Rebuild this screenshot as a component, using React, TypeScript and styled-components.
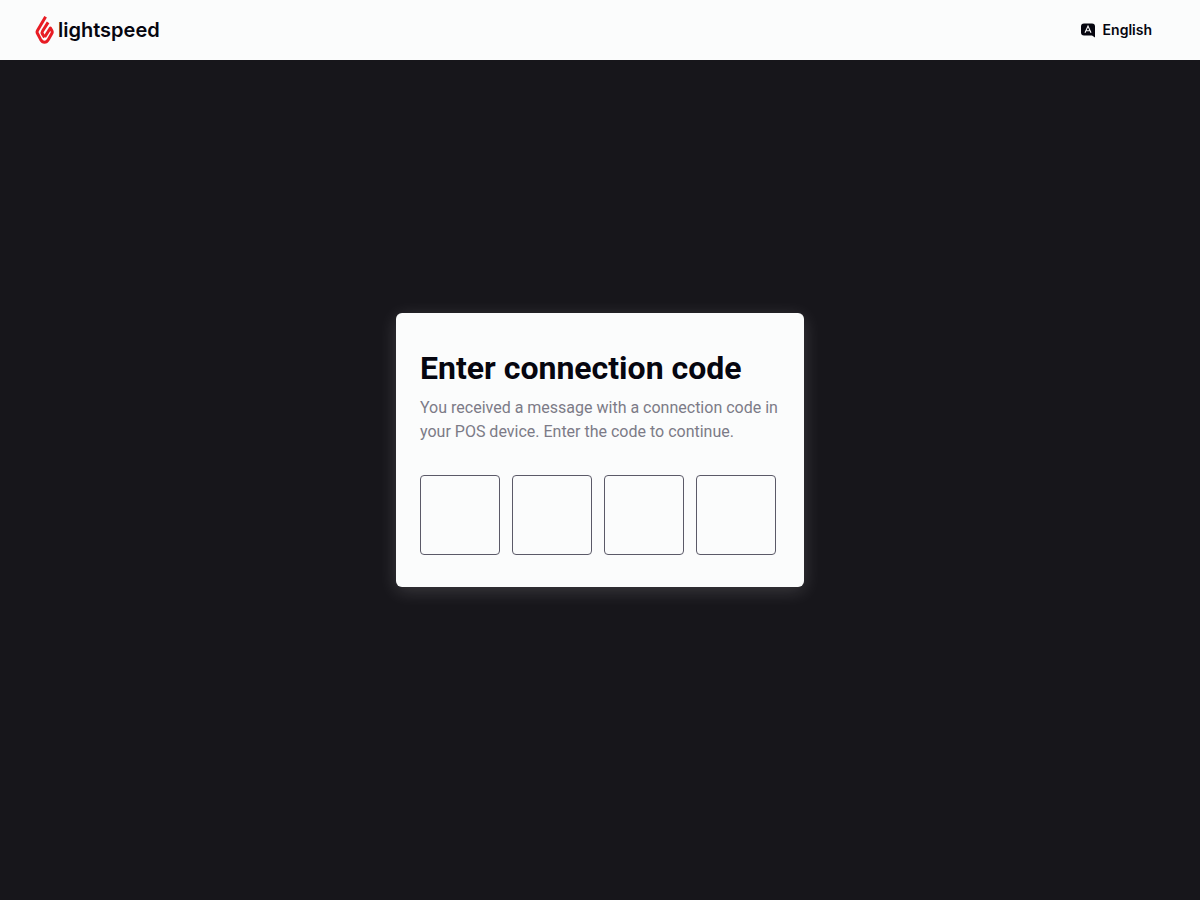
import React from "react";
import styled, { createGlobalStyle } from "styled-components";

const GlobalStyle = createGlobalStyle`
  * { box-sizing: border-box; }
  body {
    margin: 0;
    background: #17161b;
    color: #06060f;
    font-family: Roboto, "Liberation Sans", sans-serif;
  }
`;

const Page = styled.div`
  min-height: 100vh;
  display: grid;
  grid-template-rows: 60px 1fr 60px;
`;

const Header = styled.header`
  display: flex;
  align-items: center;
  justify-content: space-between;
  padding: 0 48px 0 35px;
  background: #fbfcfc;
`;

const Brand = styled.a`
  display: flex;
  align-items: center;
  gap: 3px;
  color: inherit;
  text-decoration: none;
`;

const Wordmark = styled.span`
  font-family: Inter, sans-serif;
  font-size: 20px;
  font-weight: 600;
  line-height: 28px;
`;

const LanguageButton = styled.button`
  display: flex;
  align-items: center;
  gap: 8px;
  padding: 0;
  border: 0;
  background: none;
  color: inherit;
  font: 600 14px/20px Inter, "Liberation Sans", sans-serif;
`;

const Main = styled.main`
  display: flex;
  align-items: center;
  justify-content: center;
  padding: 24px 16px;
`;

const Card = styled.form`
  width: 100%;
  max-width: 408px;
  padding: 35px 24px 32px;
  border-radius: 6px;
  background: #fbfcfc;
  box-shadow: 0 4px 18px rgba(255, 255, 255, 0.16);
`;

const Title = styled.h1`
  margin: 0 0 8px;
  font-size: 32px;
  font-weight: 700;
  line-height: 40px;
`;

const Description = styled.p`
  margin: 0 0 31px;
  color: #7c7b87;
  font-size: 16px;
  line-height: 24px;
`;

const CodeFields = styled.div`
  display: flex;
  gap: 12px;
`;

const Digit = styled.input`
  flex: 0 1 80px;
  min-width: 0;
  height: 80px;
  padding: 0;
  border: 1px solid #5b5a68;
  border-radius: 4px;
  background: transparent;
  color: inherit;
  font: 600 32px/40px Roboto, "Liberation Sans", sans-serif;
  text-align: center;
`;

const FlameIcon = () => (
  <svg width="20" height="30" viewBox="0 0 20 30" aria-hidden="true">
    <g fill="none" stroke="#e81c24" strokeWidth="3" strokeLinejoin="round">
      <path d="M10.6 1.8 2.5 15.4Q1.6 17 2.5 18.6L5.6 24.4Q7.2 27.2 9.5 27.2T13.4 24.4L16.8 18.6Q17.7 17 16.8 15.4L15.4 13 9.7 22" />
      <path d="M13.1 7.4 7.6 16Q6.6 17.6 7.4 18.9L9.6 22.4" />
    </g>
  </svg>
);

const LanguageIcon = () => (
  <svg width="14" height="15" viewBox="0 0 14 15" aria-hidden="true">
    <path d="M3 0.5h8a3 3 0 0 1 3 3V14.5L11 12.5H3a3 3 0 0 1-3-3v-6a3 3 0 0 1 3-3Z" fill="currentColor" />
    <path d="M4 9.8 7 3l3 6.8M5 7.7h4" fill="none" stroke="#fbfcfc" strokeWidth="1.1" />
  </svg>
);

export default function App() {
  return (
    <>
      <GlobalStyle />
      <Page>
        <Header>
          <Brand href="#">
            <FlameIcon />
            <Wordmark>lightspeed</Wordmark>
          </Brand>
          <LanguageButton type="button">
            <LanguageIcon />
            English
          </LanguageButton>
        </Header>
        <Main>
          <Card>
            <Title>Enter connection code</Title>
            <Description>
              You received a message with a connection code in your POS device. Enter the code to continue.
            </Description>
            <CodeFields role="group" aria-label="Connection code">
              {[1, 2, 3, 4].map((n) => (
                <Digit key={n} type="text" inputMode="numeric" maxLength={1} aria-label={`Digit ${n}`} />
              ))}
            </CodeFields>
          </Card>
        </Main>
      </Page>
    </>
  );
}
